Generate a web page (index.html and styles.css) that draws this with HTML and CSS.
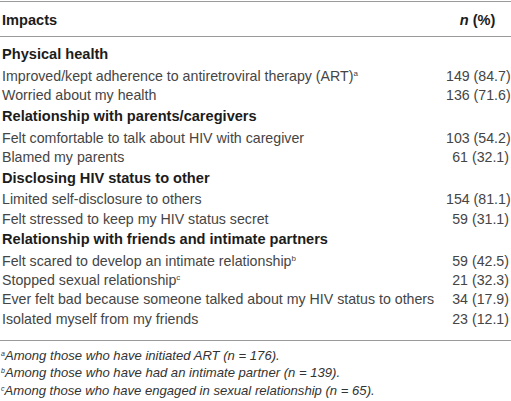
FILE: index.html
```html
<!DOCTYPE html>
<html lang="en">

<head>
  <meta charset="UTF-8" />
  <meta name="viewport" content="width=device-width, initial-scale=1.0" />
  <title>Impacts</title>
  <link rel="stylesheet" href="styles.css">
</head>

<body>
  <table class="impacts">
    <thead>
      <tr>
        <th class="label">Impacts</th>
        <th class="count"><i>n</i> (%)</th>
      </tr>
    </thead>
    <tbody>
      <tr class="group first">
        <td colspan="2">Physical health</td>
      </tr>
      <tr>
        <td>Improved/kept adherence to antiretroviral therapy (ART)<sup>a</sup></td>
        <td class="num">149 (84.7)</td>
      </tr>
      <tr>
        <td>Worried about my health</td>
        <td class="num">136 (71.6)</td>
      </tr>
      <tr class="group">
        <td colspan="2">Relationship with parents/caregivers</td>
      </tr>
      <tr>
        <td>Felt comfortable to talk about HIV with caregiver</td>
        <td class="num">103 (54.2)</td>
      </tr>
      <tr>
        <td>Blamed my parents</td>
        <td class="num">61 (32.1)</td>
      </tr>
      <tr class="group">
        <td colspan="2">Disclosing HIV status to other</td>
      </tr>
      <tr>
        <td>Limited self-disclosure to others</td>
        <td class="num">154 (81.1)</td>
      </tr>
      <tr>
        <td>Felt stressed to keep my HIV status secret</td>
        <td class="num">59 (31.1)</td>
      </tr>
      <tr class="group">
        <td colspan="2">Relationship with friends and intimate partners</td>
      </tr>
      <tr>
        <td>Felt scared to develop an intimate relationship<sup>b</sup></td>
        <td class="num">59 (42.5)</td>
      </tr>
      <tr>
        <td>Stopped sexual relationship<sup>c</sup></td>
        <td class="num">21 (32.3)</td>
      </tr>
      <tr>
        <td>Ever felt bad because someone talked about my HIV status to others</td>
        <td class="num">34 (17.9)</td>
      </tr>
      <tr>
        <td>Isolated myself from my friends</td>
        <td class="num">23 (12.1)</td>
      </tr>
    </tbody>
  </table>
  <footer class="notes">
    <p><sup>a</sup>Among those who have initiated ART (n = 176).</p>
    <p><sup>b</sup>Among those who have had an intimate partner (n = 139).</p>
    <p><sup>c</sup>Among those who have engaged in sexual relationship (n = 65).</p>
  </footer>
</body>

</html>
```

FILE: styles.css
```css
body {
  margin: 0;
  background: #fff;
  font-family: "Liberation Sans", Arial, sans-serif;
  color: #454545;
}

.impacts {
  width: 511px;
  margin-top: 1px;
  border-collapse: collapse;
  table-layout: fixed;
  font-size: 14.2px;
}

.impacts th {
  padding: 10px 2px 7px 2px;
  line-height: 17px;
  font-size: 14.6px;
  font-weight: bold;
  color: #1c1c1c;
  border-top: 1px solid #9a9a9a;
  border-bottom: 1px solid #9a9a9a;
}

.impacts th.label {
  text-align: left;
}

.impacts th.count {
  width: 63px;
  text-align: center;
}

.impacts td {
  padding: 0 2px;
  line-height: 19.2px;
  white-space: nowrap;
}

.impacts td.num {
  text-align: right;
}

.group td {
  padding-top: 2.6px;
  padding-bottom: 3.7px;
  line-height: 17px;
  font-size: 14.6px;
  font-weight: bold;
  color: #1c1c1c;
}

.group.first td {
  padding-top: 9.3px;
}

sup {
  font-size: 8px;
  line-height: 0;
  vertical-align: 5px;
}

.notes {
  margin-top: 11px;
  padding-top: 6px;
  border-top: 1px solid #9a9a9a;
  font-size: 13.1px;
  font-style: italic;
  color: #333;
}

.notes p {
  margin: 0;
  padding-left: 1px;
  line-height: 17.5px;
}

.notes sup {
  font-size: 7px;
  vertical-align: 4px;
}
```
